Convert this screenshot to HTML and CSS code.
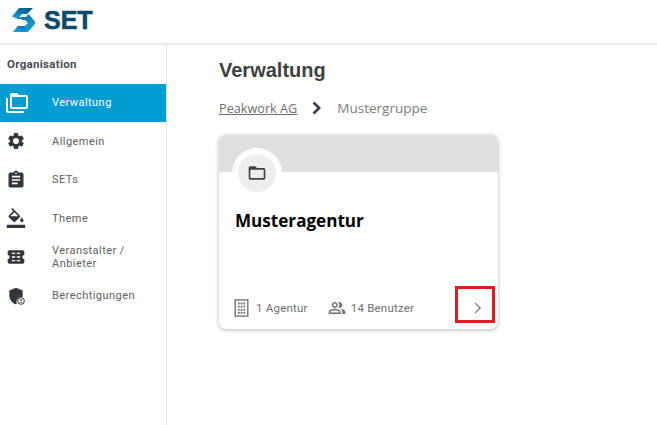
FILE: index.html
```html
<!DOCTYPE html>
<html lang="de">
<head>
<meta charset="utf-8">
<title>SET Verwaltung</title>
<link rel="stylesheet" href="styles.css">
</head>
<body>
<header class="topbar">
  <svg class="logo-mark" width="24" height="24" viewBox="0 0 24 24">
    <defs>
      <linearGradient id="lg" x1="0" y1="1" x2="1" y2="0"><stop offset="0" stop-color="#16a6e2"/><stop offset="1" stop-color="#04507a"/></linearGradient>
      <linearGradient id="lg2" x1="0" y1="0" x2="1" y2="1"><stop offset="0" stop-color="#0a5f8e"/><stop offset="1" stop-color="#1aa8e2"/></linearGradient>
      <linearGradient id="lg3" x1="0" y1="1" x2="1" y2="0"><stop offset="0" stop-color="#1fb0ea"/><stop offset="1" stop-color="#0b6fa5"/></linearGradient>
    </defs>
    <path d="M7 0H21L15 6H10L7.500 8.500 10 11H6L0 8.500Z" fill="url(#lg)"/>
    <path d="M16.500 6L23 13.500V16L16 24H1L6 18H13L16 15 13 12H10L7.500 9H14Z" fill="url(#lg2)"/>
    <path d="M1 24L6 18H13L9 24Z" fill="url(#lg3)"/>
  </svg>
  <span class="logo-text">SET</span>
</header>
<div class="body-row">
  <aside class="sidebar">
    <div class="side-title">Organisation</div>
    <nav class="nav">
      <a class="nav-item active">
        <svg class="nav-icon" viewBox="0 0 24 24" width="24" height="24"><path fill="currentColor" d="M3 7H1v13c0 1.100.9 2 2 2h16v-2H3V7zm18-3h-7l-2-2H7c-1.100 0-2 .9-2 2v12c0 1.100.9 2 2 2h14c1.100 0 2-.9 2-2V6c0-1.100-.9-2-2-2zm0 12H7V6h14v10z"/></svg>
        <span class="nav-label">Verwaltung</span>
      </a>
      <a class="nav-item">
        <svg class="nav-icon" viewBox="0 0 24 24" width="20" height="20"><path fill="currentColor" d="M19.140 12.940c.04-.3.06-.61.06-.94s-.02-.64-.07-.94l2.030-1.580a.49.49 0 0 0 .12-.61l-1.920-3.320a.49.49 0 0 0-.59-.22l-2.390.96a7 7 0 0 0-1.620-.94l-.36-2.540a.48.48 0 0 0-.48-.41h-3.840a.47.47 0 0 0-.47.41l-.36 2.540c-.59.24-1.130.57-1.620.94l-2.390-.96a.48.48 0 0 0-.59.22L2.740 8.870a.47.47 0 0 0 .12.61l2.030 1.580c-.05.3-.09.63-.09.94s.02.64.07.94l-2.030 1.580a.49.49 0 0 0-.12.61l1.920 3.320c.12.22.37.29.59.22l2.390-.96c.5.38 1.030.7 1.620.94l.36 2.540c.05.24.24.41.48.41h3.840c.24 0 .44-.17.47-.41l.36-2.540c.59-.24 1.130-.56 1.620-.94l2.390.96c.22.08.47 0 .59-.22l1.920-3.320a.47.47 0 0 0-.12-.61l-2.010-1.580zM12 15.600A3.610 3.610 0 0 1 8.400 12 3.610 3.610 0 0 1 12 8.400a3.610 3.610 0 0 1 3.600 3.600 3.610 3.610 0 0 1-3.600 3.600z"/></svg>
        <span class="nav-label">Allgemein</span>
      </a>
      <a class="nav-item">
        <svg class="nav-icon" viewBox="0 0 24 24" width="20" height="20"><path fill="currentColor" d="M19 3h-4.180C14.400 1.840 13.300 1 12 1s-2.400.84-2.820 2H5c-1.100 0-2 .9-2 2v14c0 1.100.9 2 2 2h14c1.100 0 2-.9 2-2V5c0-1.100-.9-2-2-2zm-7 0c.55 0 1 .45 1 1s-.45 1-1 1-1-.45-1-1 .45-1 1-1zm2 14H7v-2h7v2zm3-4H7v-2h10v2zm0-4H7V7h10v2z"/></svg>
        <span class="nav-label">SETs</span>
      </a>
      <a class="nav-item">
        <svg class="nav-icon" viewBox="0 0 24 24" width="20" height="20"><path fill="currentColor" d="M16.560 8.940 7.620 0 6.210 1.410l2.380 2.380-5.150 5.150a1.490 1.490 0 0 0 0 2.120l5.500 5.500c.29.29.68.44 1.060.44s.77-.15 1.060-.44l5.500-5.500c.59-.58.59-1.530 0-2.120zM5.210 10 10 5.210 14.790 10H5.210zM19 11.500s-2 2.170-2 3.500c0 1.100.9 2 2 2s2-.9 2-2c0-1.330-2-3.500-2-3.500zM1 20h22v4H1v-4z"/></svg>
        <span class="nav-label">Theme</span>
      </a>
      <a class="nav-item">
        <svg class="nav-icon" viewBox="0 0 24 24" width="20" height="20"><path fill="currentColor" d="M22 9.500V6c0-1.100-.9-2-2-2H4C2.900 4 2 4.900 2 6v3.500c1.300 0 2.300 1.100 2.300 2.500S3.300 14.500 2 14.500V18c0 1.100.9 2 2 2h16c1.100 0 2-.9 2-2v-3.500c-1.300 0-2.300-1.100-2.300-2.500s1-2.500 2.300-2.500zM11 17H7v-1.500h4V17zm0-4.200H7v-1.600h4v1.600zm0-4.300H7V7h4v1.500zm6 8.500h-4v-1.500h4V17zm0-4.200h-4v-1.600h4v1.600zm0-4.300h-4V7h4v1.500z"/></svg>
        <span class="nav-label">Veranstalter / Anbieter</span>
      </a>
      <a class="nav-item shield">
        <svg class="nav-icon" viewBox="0 0 24 24" width="20" height="20"><path fill="currentColor" d="M12 2 4 5.500V11c0 5 3.400 9.700 8 11 .3-.07.59-.17.88-.27A6 6 0 0 1 20 13.600V5.500l-8-3.500z"/><circle cx="18" cy="18" r="4" fill="none" stroke="currentColor" stroke-width="1.200"/><circle cx="18" cy="17" r="1.100" fill="currentColor"/><path fill="currentColor" d="M15.800 20.500c.5-1.200 3.900-1.200 4.400 0z"/></svg>
        <span class="nav-label">Berechtigungen</span>
      </a>
    </nav>
  </aside>
  <main class="content">
    <h1 class="page-title">Verwaltung</h1>
    <div class="crumbs">
      <a class="crumb-link">Peakwork AG</a>
      <svg class="crumb-sep" viewBox="0 0 24 24" width="24" height="24"><path fill="currentColor" d="M9.500 5.500 7.600 7.400 12.200 12l-4.600 4.600 1.900 1.900 6.500-6.500z"/></svg>
      <span class="crumb-current">Mustergruppe</span>
    </div>
    <article class="card">
      <div class="card-head"></div>
      <div class="avatar-ring">
        <div class="avatar">
          <svg viewBox="0 0 24 24" width="20" height="20"><path fill="currentColor" d="M20 6h-8l-2-2H4c-1.100 0-1.990.9-1.990 2L2 18c0 1.100.9 2 2 2h16c1.100 0 2-.9 2-2V8c0-1.100-.9-2-2-2zm0 12H4V8h16v10z"/></svg>
        </div>
      </div>
      <h2 class="card-title">Musteragentur</h2>
      <div class="card-foot">
        <svg class="foot-building" viewBox="0 0 16 20" width="15" height="18">
          <rect x="1" y="1" width="14" height="18" fill="none" stroke="currentColor" stroke-width="1.500"/>
          <path fill="currentColor" d="M4 4h2v2H4zM7 4h2v2H7zM10 4h2v2h-2zM4 7.500h2v2H4zM7 7.500h2v2H7zM10 7.500h2v2h-2zM4 11h2v2H4zM7 11h2v2H7zM10 11h2v2h-2zM4 14.500h2v2H4zM7 14.500h2v2H7zM10 14.500h2v2h-2z"/>
        </svg>
        <span class="foot-text">1 Agentur</span>
        <svg class="foot-people" viewBox="0 0 24 24" width="18" height="18"><path fill="currentColor" d="M16.670 13.130C18.040 14.060 19 15.320 19 17v3h4v-3c0-2.180-3.570-3.470-6.330-3.870zM15 12c2.210 0 4-1.790 4-4s-1.790-4-4-4c-.47 0-.91.1-1.330.24a5.980 5.980 0 0 1 0 7.520c.42.14.86.24 1.330.24zM9 12c2.210 0 4-1.790 4-4s-1.790-4-4-4-4 1.790-4 4 1.790 4 4 4zm0-6c1.100 0 2 .9 2 2s-.9 2-2 2-2-.9-2-2 .9-2 2-2zM9 13c-2.670 0-8 1.340-8 4v3h16v-3c0-2.660-5.330-4-8-4zm6 5H3v-.99C3.200 16.290 6.300 15 9 15s5.800 1.290 6 2v1z"/></svg>
        <span class="foot-text">14 Benutzer</span>
        <span class="foot-action">
          <svg viewBox="0 0 24 24" width="16" height="16"><path fill="currentColor" d="M8.600 5.400 10 4l8 8-8 8-1.400-1.400L15.200 12z"/></svg>
        </span>
      </div>
      <div class="highlight"></div>
    </article>
  </main>
</div>
</body>
</html>
```
FILE: styles.css
```css
* { box-sizing: border-box; }
html, body { margin: 0; padding: 0; height: 100%; overflow: hidden; }
body { background: #fff; font-family: Roboto, "Liberation Sans", sans-serif; color: #4a4a4a; display: flex; flex-direction: column; }
.topbar { height: 45px; border-bottom: 2px solid #ececec; display: flex; align-items: flex-start; padding: 8px 0 0 12px; flex: none; }
.logo-mark { display: block; }
.logo-text { font-family: "Liberation Sans", sans-serif; font-weight: 700; font-size: 25px; line-height: 24px; color: #0e4a68; margin-left: 8px; -webkit-text-stroke: .6px #0e4a68; }
.body-row { flex: 1; display: flex; min-height: 0; }
.sidebar { width: 167px; border-right: 1px solid #e4e4e4; flex: none; }
.side-title { font-size: 11.500px; font-weight: 700; letter-spacing: .3px; color: #4a4a55; padding: 12px 0 0 7px; height: 39px; line-height: 14px; }
.nav { display: flex; flex-direction: column; }
.nav-item { height: 38.500px; display: flex; align-items: center; color: #616161; position: relative; padding-left: 52px; }
.nav-item.active { background: #009dd3; color: #fff; height: 38px; padding-bottom: 2px; }
.nav-label { font-size: 11px; letter-spacing: .45px; line-height: 13px; max-width: 90px; }
.nav-icon { position: absolute; left: 6px; top: 50%; transform: translateY(-50%); color: #33363b; }
.nav-item.active .nav-icon { color: #fff; left: 5px; }
.nav-item.shield .nav-icon { top: calc(50% + 1px); }
.content { flex: 1; padding: 14px 0 0 52px; min-width: 0; }
.page-title { margin: 0; font-family: "Liberation Sans", sans-serif; font-size: 20px; font-weight: 700; color: #3f3f3f; line-height: 23px; }
.crumbs { display: flex; align-items: center; margin-top: 14px; height: 24px; font-family: "Open Sans", sans-serif; font-size: 13px; color: #707070; }
.crumb-link { text-decoration: underline; color: #6e6e6e; font-size: 12.700px; }
.crumb-sep { color: #3c4048; margin: 0 8px 0 8px; }
.crumb-current { color: #7d7d7d; font-size: 13.500px; margin-top: -1px; }
.card { position: relative; width: 279px; height: 194px; margin-top: 15px; border-radius: 7px; background: #fff; box-shadow: 0 1px 4px rgba(0,0,0,.3); overflow: visible; }
.card-head { height: 37px; background: #dfdfdf; border-radius: 7px 7px 0 0; }
.avatar-ring { position: absolute; left: 13px; top: 13px; width: 50px; height: 50px; border-radius: 50%; background: #fff; display: flex; align-items: center; justify-content: center; }
.avatar { width: 38px; height: 38px; border-radius: 50%; background: #eeeeee; display: flex; align-items: center; justify-content: center; color: #3c4048; }
.card-title { margin: 0; position: absolute; left: 16px; top: 74px; font-family: "Open Sans", sans-serif; font-size: 17.100px; font-weight: 700; color: #000; line-height: 24px; }
.card-foot { position: absolute; left: 15px; right: 4px; bottom: 10px; height: 22px; display: flex; align-items: center; color: #6f6f6f; }
.foot-text { font-size: 11.500px; letter-spacing: .22px; }
.foot-building { margin-right: 7px; }
.foot-people { margin: 0 5px 0 20px; }
.foot-action { margin-left: auto; width: 39px; height: 22px; display: flex; align-items: center; justify-content: center; padding-left: 5px; color: #6f6f6f; }
.highlight { position: absolute; left: 236px; top: 151px; width: 40px; height: 37px; border: 3px solid #e01b24; }
```
